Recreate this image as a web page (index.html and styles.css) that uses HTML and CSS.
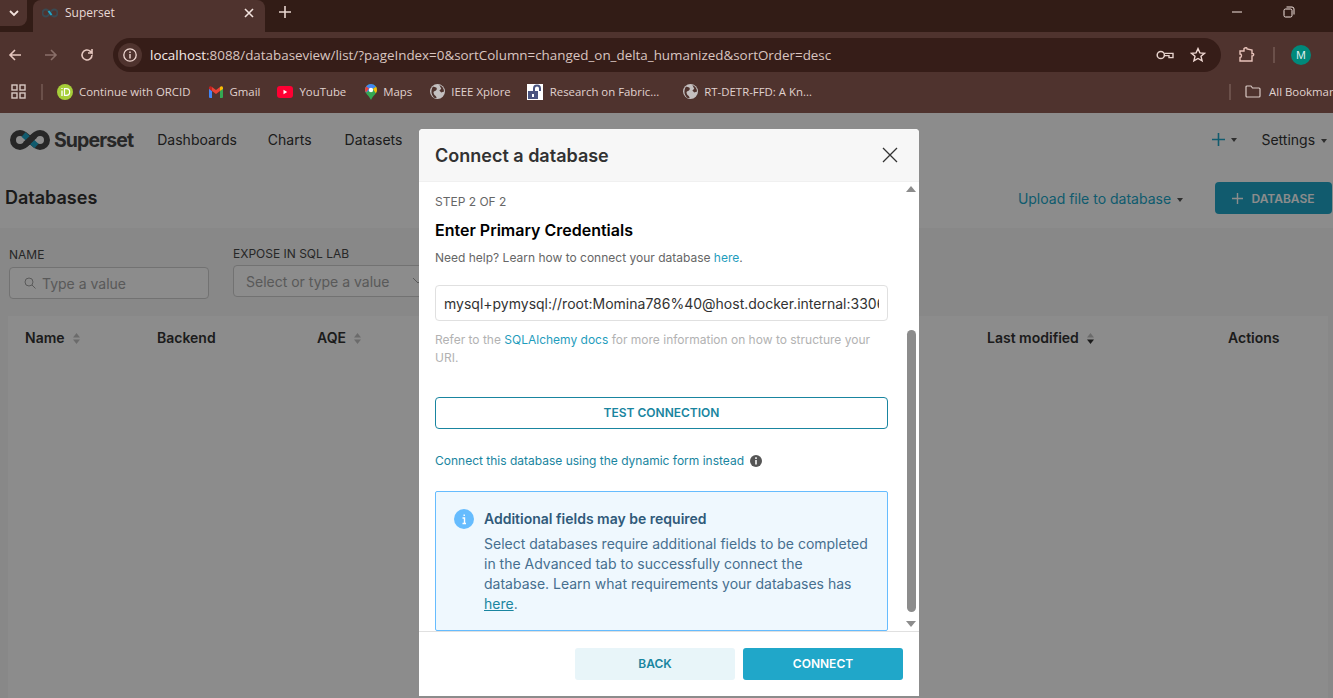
FILE: index.html
```html
<!DOCTYPE html>
<html lang="en">
<head>
    <meta charset="UTF-8">
    <meta name="viewport" content="width=device-width, initial-scale=1.0">
    <title>Superset</title>
    <link rel="stylesheet" href="styles.css">
</head>
<body>

    <!-- Browser chrome -->
    <div class="tabstrip">
        <div class="tab-search">
            <svg width="12" height="12" viewBox="0 0 12 12"><path d="M2 4l4 4 4-4" fill="none" stroke="#f3e3de" stroke-width="1.8"/></svg>
        </div>
        <div class="tab">
            <svg class="tab-logo" width="16" height="10" viewBox="0 0 32 20"><path d="M16 10C13 5 11 3 8 3a7 7 0 0 0 0 14c3 0 5-2 8-7s5-7 8-7a7 7 0 0 1 0 14c-3 0-5-2-8-7z" fill="none" stroke="#3a4a52" stroke-width="4"/><path d="M13 6l6 8" stroke="#20a7c9" stroke-width="4"/></svg>
            <span class="tab-title">Superset</span>
            <svg width="12" height="12" viewBox="0 0 12 12"><path d="M2 2l8 8M10 2l-8 8" stroke="#f3e3de" stroke-width="1.6"/></svg>
        </div>
        <svg class="new-tab" width="14" height="14" viewBox="0 0 14 14"><path d="M7 1v12M1 7h12" stroke="#e8d5cf" stroke-width="1.6"/></svg>
        <div class="window-controls">
            <svg width="12" height="12" viewBox="0 0 12 12"><path d="M1 6h10" stroke="#f3e3de" stroke-width="1"/></svg>
            <svg width="12" height="12" viewBox="0 0 12 12"><rect x="1" y="3" width="8" height="8" rx="1.5" fill="none" stroke="#f3e3de"/><path d="M3.500 1h5.500a2 2 0 0 1 2 2v5.500" fill="none" stroke="#f3e3de"/></svg>
            <svg width="12" height="12" viewBox="0 0 12 12"><path d="M1 1l10 10M11 1l-10 10" stroke="#f3e3de"/></svg>
        </div>
    </div>

    <div class="toolbar">
        <svg class="tool" width="16" height="16" viewBox="0 0 16 16"><path d="M14 8H3M8 3L3 8l5 5" fill="none" stroke="#e6c7bf" stroke-width="1.6"/></svg>
        <svg class="tool" width="16" height="16" viewBox="0 0 16 16"><path d="M2 8h11M8 3l5 5-5 5" fill="none" stroke="#8a6f69" stroke-width="1.6"/></svg>
        <svg class="tool" width="16" height="16" viewBox="0 0 16 16"><path d="M13 8a5 5 0 1 1-1.600-3.700L13 6V2M13 6H9" fill="none" stroke="#e6c7bf" stroke-width="1.6"/></svg>
        <div class="urlbar">
            <div class="site-info">
                <svg width="16" height="16" viewBox="0 0 16 16"><circle cx="8" cy="8" r="6.200" fill="none" stroke="#f0d8d2" stroke-width="1.3"/><path d="M8 7v4.400M8 4.400v1.500" stroke="#f0d8d2" stroke-width="1.4"/></svg>
            </div>
            <div class="url"><span class="url-host">localhost</span>:8088/databaseview/list/?pageIndex=0&amp;sortColumn=changed_on_delta_humanized&amp;sortOrder=desc</div>
            <svg class="url-key" width="18" height="12" viewBox="0 0 18 12"><circle cx="4.800" cy="6" r="3.600" fill="none" stroke="#e6d2cc" stroke-width="1.5"/><path d="M8.400 4.400H17v4.200h-4V6.600H8.400" fill="none" stroke="#e6d2cc" stroke-width="1.4"/></svg>
            <svg class="url-star" width="16" height="16" viewBox="0 0 16 16"><path d="M8 1.600l1.900 4.300 4.600.4-3.500 3 1.100 4.600L8 11.500l-4.100 2.400L5 9.300l-3.500-3 4.600-.4z" fill="none" stroke="#f0d8d2" stroke-width="1.4"/></svg>
        </div>
        <svg class="extensions" width="18" height="18" viewBox="0 0 18 18"><path d="M2 5h4V2.500c2-1.500 3-.5 3 0V3l5 1v3.500c2-.5 2.500 2.500 0 2.500v5H2v-3.500c2 0 2-3.500 0-3.500z" fill="none" stroke="#e9c4bb" stroke-width="1.4"/></svg>
        <div class="tool-divider"></div>
        <div class="avatar">M</div>
    </div>

    <div class="bookmarks">
        <svg class="apps" width="15" height="15" viewBox="0 0 15 15"><g fill="none" stroke="#d9c9c4" stroke-width="1.4"><rect x="1" y="1" width="5" height="5"/><rect x="9" y="1" width="5" height="5"/><rect x="1" y="9" width="5" height="5"/><rect x="9" y="9" width="5" height="5"/></g></svg>
        <div class="bm-divider"></div>
        <div class="bookmark bm-orcid">
            <svg width="16" height="16" viewBox="0 0 16 16"><circle cx="8" cy="8" r="8" fill="#a6ce39"/><path d="M5 6.500V12M5 4v1" stroke="#fff" stroke-width="1.300"/><path d="M7.500 4.700V11.400h1.800a3.300 3.300 0 0 0 0-6.700z" fill="none" stroke="#fff" stroke-width="1.200"/></svg>
            Continue with ORCID
        </div>
        <div class="bookmark bm-gmail">
            <svg width="14" height="12" viewBox="0 0 14 12"><path d="M0 2v9a1 1 0 0 0 1 1h2V5z" fill="#4285f4"/><path d="M14 2v9a1 1 0 0 1-1 1h-2V5z" fill="#34a853"/><path d="M3 5l4 3 4-3V1l-4 3-4-3z" fill="#ea4335"/><path d="M0 2c0-2 2-2.300 3-1v4L0 3z" fill="#c5221f"/><path d="M14 2c0-2-2-2.300-3-1v4l3-2z" fill="#fbbc04"/></svg>
            Gmail
        </div>
        <div class="bookmark bm-youtube">
            <svg width="16" height="12" viewBox="0 0 16 12"><rect width="16" height="12" rx="3" fill="#ff0033"/><path d="M6.500 3.800v4.400L10.200 6z" fill="#fff"/></svg>
            YouTube
        </div>
        <div class="bookmark bm-maps">
            <svg width="12" height="16" viewBox="0 0 12 16"><path d="M6 0a6 6 0 0 1 6 6c0 3.500-4 5.500-6 10-2-4.500-6-6.500-6-10a6 6 0 0 1 6-6z" fill="#34a853"/><path d="M6 0a6 6 0 0 1 5 2.700L1 8.500A6 6 0 0 1 0 6a6 6 0 0 1 6-6z" fill="#4285f4"/><path d="M1.200 2.400L4 4.500 1 8.500A6 6 0 0 1 0 6c0-1.400.4-2.600 1.200-3.600z" fill="#ea4335"/><path d="M12 6c0 1.200-.5 2.300-1.200 3.300L8 5l3-2.300c.6.900 1 2.100 1 3.300z" fill="#fbbc04"/><circle cx="6" cy="6" r="2.200" fill="#fff"/></svg>
            Maps
        </div>
        <div class="bookmark bm-ieee">
            <svg width="15" height="15" viewBox="0 0 16 16"><circle cx="8" cy="8" r="8" fill="#c4c0c0"/><path d="M3 3c3 0 5 1 4 3S3 7 4 10s3 2 3 5H5C2 13 0 8 3 3zM10 1c3 1 5 4 5 7l-3 1-2-2 2-2z" fill="#4f332e"/></svg>
            IEEE Xplore
        </div>
        <div class="bookmark bm-research">
            <svg class="lock" width="16" height="16" viewBox="0 0 16 16"><rect width="16" height="16" fill="#fff"/><rect x="1" y="7" width="10" height="8" fill="#4a5480"/><path d="M7 7V4.500a3 3 0 0 1 6 0V7" fill="none" stroke="#4a5480" stroke-width="2"/><rect x="5" y="10" width="2" height="3" fill="#fff"/></svg>
            Research on Fabric...
        </div>
        <div class="bookmark bm-rt">
            <svg width="15" height="15" viewBox="0 0 16 16"><circle cx="8" cy="8" r="8" fill="#c4c0c0"/><path d="M3 3c3 0 5 1 4 3S3 7 4 10s3 2 3 5H5C2 13 0 8 3 3zM10 1c3 1 5 4 5 7l-3 1-2-2 2-2z" fill="#4f332e"/></svg>
            RT-DETR-FFD: A Kn...
        </div>
        <div class="bm-all">
            <div class="bm-divider"></div>
            <div class="bookmark all-bookmarks">
                <svg width="16" height="13" viewBox="0 0 16 13"><path d="M1 2a1 1 0 0 1 1-1h4l1.500 2H14a1 1 0 0 1 1 1v7a1 1 0 0 1-1 1H2a1 1 0 0 1-1-1z" fill="none" stroke="#d9c9c4" stroke-width="1.200"/></svg>
                All Bookmarks
            </div>
        </div>
    </div>

    <!-- Superset page -->
    <div class="app">
        <div class="navbar">
            <div class="brand">
                <svg width="42" height="22" viewBox="0 0 42 22"><path d="M21 11C17 6 14.500 4 11 4a7 7 0 0 0 0 14c3.500 0 6-2 10-7s6.500-7 10-7a7 7 0 0 1 0 14c-3.500 0-6-2-10-7z" fill="none" stroke="#484848" stroke-width="6"/><path d="M14.500 5.500l4.500 4M23 13l4.500 4" stroke="#20a7c9" stroke-width="6"/><path d="M16 15.500L26 6.500" stroke="#484848" stroke-width="6"/></svg>
                <span class="brand-name">Superset</span>
            </div>
            <a class="nav-item">Dashboards</a>
            <a class="nav-item nav-charts">Charts</a>
            <a class="nav-item">Datasets</a>
            <div class="nav-right">
                <span class="nav-plus">
                    <svg width="13" height="13" viewBox="0 0 13 13"><path d="M6.500 0v13M0 6.500h13" stroke="#20a7c9" stroke-width="1.600"/></svg>
                    <i class="caret"></i>
                </span>
                <span class="nav-settings">Settings <i class="caret"></i></span>
            </div>
        </div>

        <div class="subheader">
            <h1>Databases</h1>
            <div class="subheader-actions">
                <span class="upload-link">Upload file to database <i class="caret"></i></span>
                <button class="add-db">
                    <svg width="11" height="11" viewBox="0 0 11 11"><path d="M5.500 0v11M0 5.500h11" stroke="#fff" stroke-width="1.400"/></svg>
                    DATABASE
                </button>
            </div>
        </div>

        <div class="filters">
            <div class="filter filter-name">
                <label>NAME</label>
                <div class="filter-input">
                    <svg width="12" height="12" viewBox="0 0 12 12"><circle cx="5" cy="5" r="4" fill="none" stroke="#a3a3a3"/><path d="M8 8l3.500 3.500" stroke="#a3a3a3"/></svg>
                    Type a value
                </div>
            </div>
            <div class="filter filter-expose">
                <label>EXPOSE IN SQL LAB</label>
                <div class="filter-input">
                    Select or type a value
                    <svg class="select-arrow" width="12" height="8" viewBox="0 0 12 8"><path d="M1 1l5 5 5-5" fill="none" stroke="#a3a3a3"/></svg>
                </div>
            </div>
        </div>

        <div class="table-panel">
            <div class="table-head">
                <div class="th">Name <svg class="sorter" width="7" height="11" viewBox="0 0 7 11"><path d="M3.500 0L7 4.500H0z" fill="#c4c4c4"/><path d="M3.500 11L7 6.500H0z" fill="#c4c4c4"/></svg></div>
                <div class="th">Backend</div>
                <div class="th">AQE <svg class="sorter" width="7" height="11" viewBox="0 0 7 11"><path d="M3.500 0L7 4.500H0z" fill="#c4c4c4"/><path d="M3.500 11L7 6.500H0z" fill="#c4c4c4"/></svg></div>
                <div class="th">Last modified <svg class="sorter" width="7" height="11" viewBox="0 0 7 11"><path d="M3.500 0L7 4.500H0z" fill="#c4c4c4"/><path d="M3.500 11L7 6.500H0z" fill="#323232"/></svg></div>
                <div class="th">Actions</div>
            </div>
        </div>

        <div class="mask"></div>

        <!-- Connect a database modal -->
        <div class="modal">
            <div class="modal-header">
                <h2>Connect a database</h2>
                <svg width="16" height="16" viewBox="0 0 16 16"><path d="M1 1l14 14M15 1L1 15" stroke="#333" stroke-width="1.300"/></svg>
            </div>
            <div class="modal-body">
                <div class="step">STEP 2 OF 2</div>
                <h3>Enter Primary Credentials</h3>
                <p class="help">Need help? Learn how to connect your database <a>here</a>.</p>
                <input class="uri-input" type="text" value="mysql+pymysql://root:Momina786%40@host.docker.internal:3306/">
                <p class="hint">Refer to the <a>SQLAlchemy docs</a> for more information on how to structure your URI.</p>
                <button class="test-btn">TEST CONNECTION</button>
                <div class="switch-form">
                    <a>Connect this database using the dynamic form instead</a>
                    <svg width="12" height="12" viewBox="0 0 12 12"><circle cx="6" cy="6" r="6" fill="#555"/><path d="M6 5v4.500M6 2.300v1.600" stroke="#fff" stroke-width="1.500"/></svg>
                </div>
                <div class="alert">
                    <svg class="alert-icon" width="20" height="20" viewBox="0 0 20 20"><circle cx="10" cy="10" r="10" fill="#66bcfe"/><path d="M8.500 9h2v5.500M8.500 14.500h3.500M10.200 5.500v1.500" fill="none" stroke="#fff" stroke-width="1.400"/></svg>
                    <div>
                        <div class="alert-title">Additional fields may be required</div>
                        <p class="alert-text">Select databases require additional fields to be completed in the Advanced tab to successfully connect the database. Learn what requirements your databases has <a>here</a>.</p>
                    </div>
                </div>
            </div>
            <div class="scrollbar">
                <i class="arrow-up"></i>
                <div class="scroll-thumb"></div>
                <i class="arrow-down"></i>
            </div>
            <div class="modal-footer">
                <button class="back-btn">BACK</button>
                <button class="connect-btn">CONNECT</button>
            </div>
        </div>
    </div>

</body>
</html>
```

FILE: styles.css
```css
/* Page */
* {
    box-sizing: border-box;
}

html, body {
    height: 100%;
}

body {
    margin: 0;
    overflow: hidden;
    display: flex;
    flex-direction: column;
    font-family: Inter, "Liberation Sans", sans-serif;
    background: #fff;
}

/* Browser chrome */
.tabstrip {
    height: 32px;
    flex: none;
    display: flex;
    background: #321c16;
    position: relative;
}

.tab-search {
    width: 27px;
    height: 26px;
    margin-right: 6px;
    display: flex;
    align-items: center;
    justify-content: center;
    background: #4f332e;
    border-radius: 0 0 8px 0;
}

.tab {
    width: 232px;
    display: flex;
    align-items: center;
    padding: 0 10px 7px 9px;
    background: #4f332e;
    border-radius: 8px 8px 0 0;
}

.tab-logo {
    margin-right: 7px;
}

.tab-title {
    flex: 1;
    font: 12px "Open Sans", sans-serif;
    color: #e9dad6;
}

.new-tab {
    margin: 5px 0 0 13px;
}

.window-controls {
    margin-left: auto;
    margin-right: -14px;
    display: flex;
    gap: 40px;
    padding-top: 6px;
}

.toolbar {
    height: 44px;
    flex: none;
    display: flex;
    align-items: center;
    padding: 2px 0 0 7px;
    background: #4f332e;
}

.tool {
    margin-right: 20px;
}

.toolbar .tool:nth-child(3) {
    margin-right: 18px;
}

.urlbar {
    width: 1108px;
    height: 34px;
    display: flex;
    align-items: center;
    padding: 0 15px 0 5px;
    background: #361d18;
    border-radius: 17px;
}

.site-info {
    width: 24px;
    height: 24px;
    margin-right: 8px;
    display: flex;
    align-items: center;
    justify-content: center;
    background: #4f332e;
    border-radius: 50%;
}

.url {
    flex: 1;
    font: 13.4px "Open Sans", sans-serif;
    color: #d9c5c0;
    white-space: nowrap;
}

.url-host {
    color: #f6ece9;
}

.url-key {
    margin-right: 16px;
}

.extensions {
    margin-left: 17px;
}

.tool-divider {
    width: 2px;
    height: 16px;
    margin: 0 16px 0 17px;
    background: #6b504a;
}

.avatar {
    width: 20px;
    height: 20px;
    border-radius: 50%;
    background: #00897b;
    color: #e8f5f3;
    font: 11px/20px "Open Sans", sans-serif;
    text-align: center;
}

.bookmarks {
    height: 37px;
    flex: none;
    display: flex;
    align-items: center;
    padding: 0 0 6px 11px;
    background: #4f332e;
    white-space: nowrap;
    overflow: hidden;
}

.bm-divider {
    width: 2px;
    height: 16px;
    margin: 0 14px 0 15px;
    background: #6b504a;
}

.bookmark {
    display: flex;
    align-items: center;
    gap: 6px;
    font: 11.4px "Open Sans", sans-serif;
    color: #e0d2ce;
}

.bm-gmail { margin-left: 18px; }
.bm-gmail svg { margin-right: 1px; }
.bm-youtube { margin-left: 17px; }
.bm-maps { margin-left: 19px; }
.bm-ieee { margin-left: 18px; }
.bm-research { margin-left: 16px; }
.bm-research svg { margin-right: 1px; }
.bm-rt { margin-left: 24px; }

.bm-all {
    margin-left: auto;
    display: flex;
    align-items: center;
    margin-right: -12px;
}

.all-bookmarks {
    gap: 8px;
}

/* Superset page */
.app {
    flex: 1;
    position: relative;
    display: flex;
    flex-direction: column;
    background: #f7f7f7;
    overflow: hidden;
}

.mask {
    position: absolute;
    inset: 0;
    background: rgba(0, 0, 0, 0.45);
}

.navbar {
    height: 53px;
    flex: none;
    display: flex;
    align-items: center;
    padding: 0 6px 0 9px;
    background: #fff;
}

.brand {
    display: flex;
    align-items: center;
    gap: 3px;
    margin-right: 24px;
}

.brand-name {
    font-size: 19.500px;
    font-weight: 700;
    letter-spacing: -0.9px;
    color: #484848;
}

.nav-item {
    font-size: 14px;
    color: #333;
    margin-right: 31px;
}

.nav-charts {
    margin-right: 33px;
}

.nav-right {
    margin-left: auto;
    display: flex;
    align-items: center;
    font-size: 14px;
    color: #333;
}

.nav-plus {
    display: flex;
    align-items: center;
    gap: 4px;
    margin-right: 24px;
}

.caret {
    display: inline-block;
    width: 0;
    height: 0;
    margin-left: 2px;
    vertical-align: middle;
    border-left: 3.5px solid transparent;
    border-right: 3.5px solid transparent;
    border-top: 4px solid #555;
}

.subheader {
    height: 62px;
    flex: none;
    display: flex;
    align-items: center;
    justify-content: space-between;
    padding: 0 1px 0 5px;
    background: #fff;
}

.subheader h1 {
    margin: 0;
    font-size: 18px;
    font-weight: 600;
    color: #323232;
}

.subheader-actions {
    display: flex;
    align-items: center;
    gap: 32px;
    padding-top: 2px;
}

.upload-link {
    font-size: 14px;
    color: #20a7c9;
}

.add-db {
    width: 117px;
    height: 32px;
    display: flex;
    align-items: center;
    justify-content: center;
    gap: 8px;
    border: 0;
    border-radius: 4px;
    background: #20a7c9;
    color: #fff;
    font: 600 12px Inter, sans-serif;
}

.filters {
    height: 88px;
    flex: none;
    display: flex;
    gap: 24px;
    padding: 18px 0 0 9px;
}

.filter label {
    display: block;
    font-size: 12px;
    color: #484848;
    line-height: 15px;
}

.filter-input {
    height: 32px;
    display: flex;
    align-items: center;
    gap: 6px;
    padding: 0 10px;
    border: 1px solid #cfcfcf;
    border-radius: 4px;
    font-size: 14px;
    color: #a3a3a3;
    background: #fff;
}

.filter-name {
    width: 200px;
    padding-top: 1px;
}

.filter-name .filter-input {
    margin-top: 5px;
    padding-left: 14px;
}

.filter-expose {
    width: 200px;
}

.filter-expose .filter-input {
    width: 260px;
    margin-top: 4px;
    padding-left: 12px;
}

.select-arrow {
    margin-left: 16px;
    flex: none;
}

.table-panel {
    flex: 1;
    margin: 0 5px 0 8px;
    background: #fff;
}

.table-head {
    height: 44px;
    padding: 0 0 2px 17px;
    display: grid;
    grid-template-columns: 132px 160px 670px 241px 1fr;
    align-items: center;
}

.th {
    font-size: 14px;
    font-weight: 600;
    color: #333;
}

.sorter {
    margin-left: 5px;
    vertical-align: -1px;
}

/* Modal */
.modal {
    position: absolute;
    top: 16px;
    left: 419px;
    width: 500px;
    height: 567px;
    display: flex;
    flex-direction: column;
    background: #fff;
    border-radius: 4px 4px 0 0;
}

.modal-header {
    height: 53px;
    flex: none;
    display: flex;
    align-items: center;
    justify-content: space-between;
    padding: 0 21px 0 16px;
    background: #f7f7f7;
    border-bottom: 1px solid #f0f0f0;
    border-radius: 4px 4px 0 0;
}

.modal-header h2 {
    margin: 0;
    font-size: 18px;
    font-weight: 600;
    color: #323232;
}

.modal-body {
    flex: 1;
    min-height: 0;
    overflow: hidden;
    padding: 12px 31px 0 16px;
}

.step {
    font-size: 12px;
    line-height: 15px;
    color: #666;
}

.modal-body h3 {
    margin: 11px 0 0;
    font-size: 16px;
    line-height: 20px;
    font-weight: 600;
    color: #000;
}

.help {
    margin: 10px 0 0;
    font-size: 12px;
    line-height: 15px;
    color: #666;
}

.modal-body a {
    color: #1f9dbd;
}

.uri-input {
    display: block;
    width: 100%;
    height: 36px;
    margin-top: 20px;
    padding: 0 8px;
    border: 1px solid #e0e0e0;
    border-radius: 4px;
    font: 14px Inter, sans-serif;
    color: #323232;
    background: #fff;
    outline: none;
}

.hint {
    margin: 10px 0 0;
    font-size: 12px;
    line-height: 18px;
    color: #b2b2b2;
}

.test-btn {
    display: block;
    width: 100%;
    height: 32px;
    margin-top: 30px;
    padding-bottom: 3px;
    border: 1px solid #1985a0;
    border-radius: 4px;
    background: #fff;
    color: #1985a0;
    font: 600 12px Inter, sans-serif;
}

.switch-form {
    display: flex;
    align-items: center;
    gap: 6px;
    margin-top: 24px;
    font-size: 12px;
    line-height: 15px;
}

.switch-form a {
    color: #1985a0;
}

.alert {
    height: 140px;
    margin-top: 23px;
    display: flex;
    gap: 10px;
    padding: 17px 18px 0;
    background: #eff8fe;
    border: 1px solid #66bcfe;
    border-radius: 2px;
}

.alert-icon {
    flex: none;
}

.alert-title {
    font-size: 14px;
    line-height: 20px;
    font-weight: 600;
    color: #2f5a7a;
}

.alert-text {
    margin: 5px 0 0;
    font-size: 14px;
    line-height: 20px;
    color: #466f8f;
}

.alert-text a {
    color: #1985a0;
    text-decoration: underline;
}

.scrollbar {
    position: absolute;
    top: 57px;
    right: 3px;
    width: 10px;
    height: 441px;
    display: flex;
    flex-direction: column;
    align-items: center;
}

.arrow-up, .arrow-down {
    width: 0;
    height: 0;
    border-left: 5px solid transparent;
    border-right: 5px solid transparent;
}

.arrow-up {
    border-bottom: 6px solid #8c8c8c;
}

.arrow-down {
    margin-top: auto;
    border-top: 6px solid #8c8c8c;
}

.scroll-thumb {
    width: 9px;
    height: 282px;
    margin-top: 138px;
    background: #8c8c8c;
    border-radius: 5px;
}

.modal-footer {
    height: 65px;
    flex: none;
    display: flex;
    justify-content: flex-end;
    gap: 8px;
    padding: 16px 16px 0;
    border-top: 1px solid #e0e0e0;
}

.back-btn, .connect-btn {
    width: 160px;
    height: 32px;
    padding-bottom: 2px;
    border: 0;
    border-radius: 3px;
    font: 600 12px Inter, sans-serif;
}

.back-btn {
    background: #e8f5f9;
    color: #1985a0;
}

.connect-btn {
    background: #20a7c9;
    color: #fff;
}
```
